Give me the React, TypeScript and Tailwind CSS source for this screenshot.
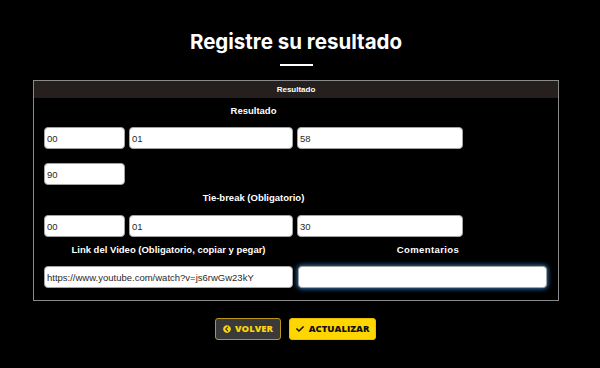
import React from "react";
import { FaChevronCircleLeft, FaCheck } from "react-icons/fa";

const inputCls =
  "h-[22px] rounded-[4px] border border-[#a3a3a3] bg-white px-[2px] text-[9.5px] text-[#2a2a2a] outline-none [font-family:'Liberation_Sans',Arial,sans-serif]";

const labelCls =
  "h-[14px] text-center text-[9.5px] font-bold leading-[14px] text-white [font-family:'Liberation_Sans',Arial,sans-serif]";

const Field: React.FC<{ value: string; className?: string; focused?: boolean }> = ({
  value,
  className = "",
  focused = false,
}) => (
  <input
    readOnly
    defaultValue={value}
    className={`${inputCls} ${className} ${
      focused ? "border-[#8fc0ea] shadow-[0_0_4px_1px_#2f6fb0]" : ""
    }`}
  />
);

const App: React.FC = () => {
  return (
    <div className="flex h-[368px] w-[600px] flex-col items-center bg-black">
      {/* Title */}
      <h1 className="ml-[-8px] mt-[28px] text-[20.5px] font-bold leading-[28px] text-white [font-family:Inter,'Noto_Sans',sans-serif]">
        Registre su resultado
      </h1>
      <div className="ml-[-8px] mt-[8px] h-[2px] w-[33px] bg-white" />

      {/* Panel */}
      <div className="ml-[-8px] mt-[14px] w-[526px] border border-[#8a8a8a]">
        <div className="h-[17px] bg-[#25201d] text-center text-[8px] font-bold leading-[17px] text-white [font-family:'Liberation_Sans',Arial,sans-serif]">
          Resultado
        </div>
        <div className="flex flex-col px-[10px] pb-[12px]">
          <div className="flex w-[419px] flex-col">
            <div className={`${labelCls} mt-[6px]`}>Resultado</div>
            <div className="mt-[9px] flex gap-[4px]">
              <Field value="00" className="w-[81px]" />
              <Field value="01" className="w-[164px]" />
              <Field value="58" className="w-[166px]" />
            </div>
            <div className="mt-[14px] flex">
              <Field value="90" className="w-[81px]" />
            </div>
            <div className={`${labelCls} mt-[6px]`}>Tie-break (Obligatorio)</div>
            <div className="mt-[10px] flex gap-[4px]">
              <Field value="00" className="w-[81px]" />
              <Field value="01" className="w-[164px]" />
              <Field value="30" className="w-[166px]" />
            </div>
          </div>
          <div className="mt-[6px] flex gap-[5px]">
            <div className="flex w-[249px] flex-col">
              <div className={labelCls}>Link del Video (Obligatorio, copiar y pegar)</div>
              <Field
                value="https://www.youtube.com/watch?v=js6rwGw23kY"
                className="mt-[9px] w-[249px]"
              />
            </div>
            <div className="flex w-[249px] flex-col">
              <div className={`${labelCls} pl-[11px] tracking-[0.4px]`}>Comentarios</div>
              <Field value="" focused className="mt-[9px] w-[249px]" />
            </div>
          </div>
        </div>
      </div>

      {/* Buttons */}
      <div className="ml-[-9px] mt-[17px] flex gap-[8px] [font-family:'Open_Sans',sans-serif]">
        <button className="flex h-[22px] w-[66px] items-center justify-center gap-[4px] rounded-[3px] border border-[#b8971c] bg-[#3a3a3a] text-[9.5px] font-extrabold text-[#ffd30a]">
          <FaChevronCircleLeft className="h-[8px] w-[8px]" />
          VOLVER
        </button>
        <button className="flex h-[22px] w-[87px] items-center justify-center gap-[5px] rounded-[3px] border border-[#e9c000] bg-[#ffd600] text-[9.5px] font-extrabold text-[#111]">
          <FaCheck className="h-[8px] w-[8px]" />
          ACTUALIZAR
        </button>
      </div>
    </div>
  );
};

export default App;
